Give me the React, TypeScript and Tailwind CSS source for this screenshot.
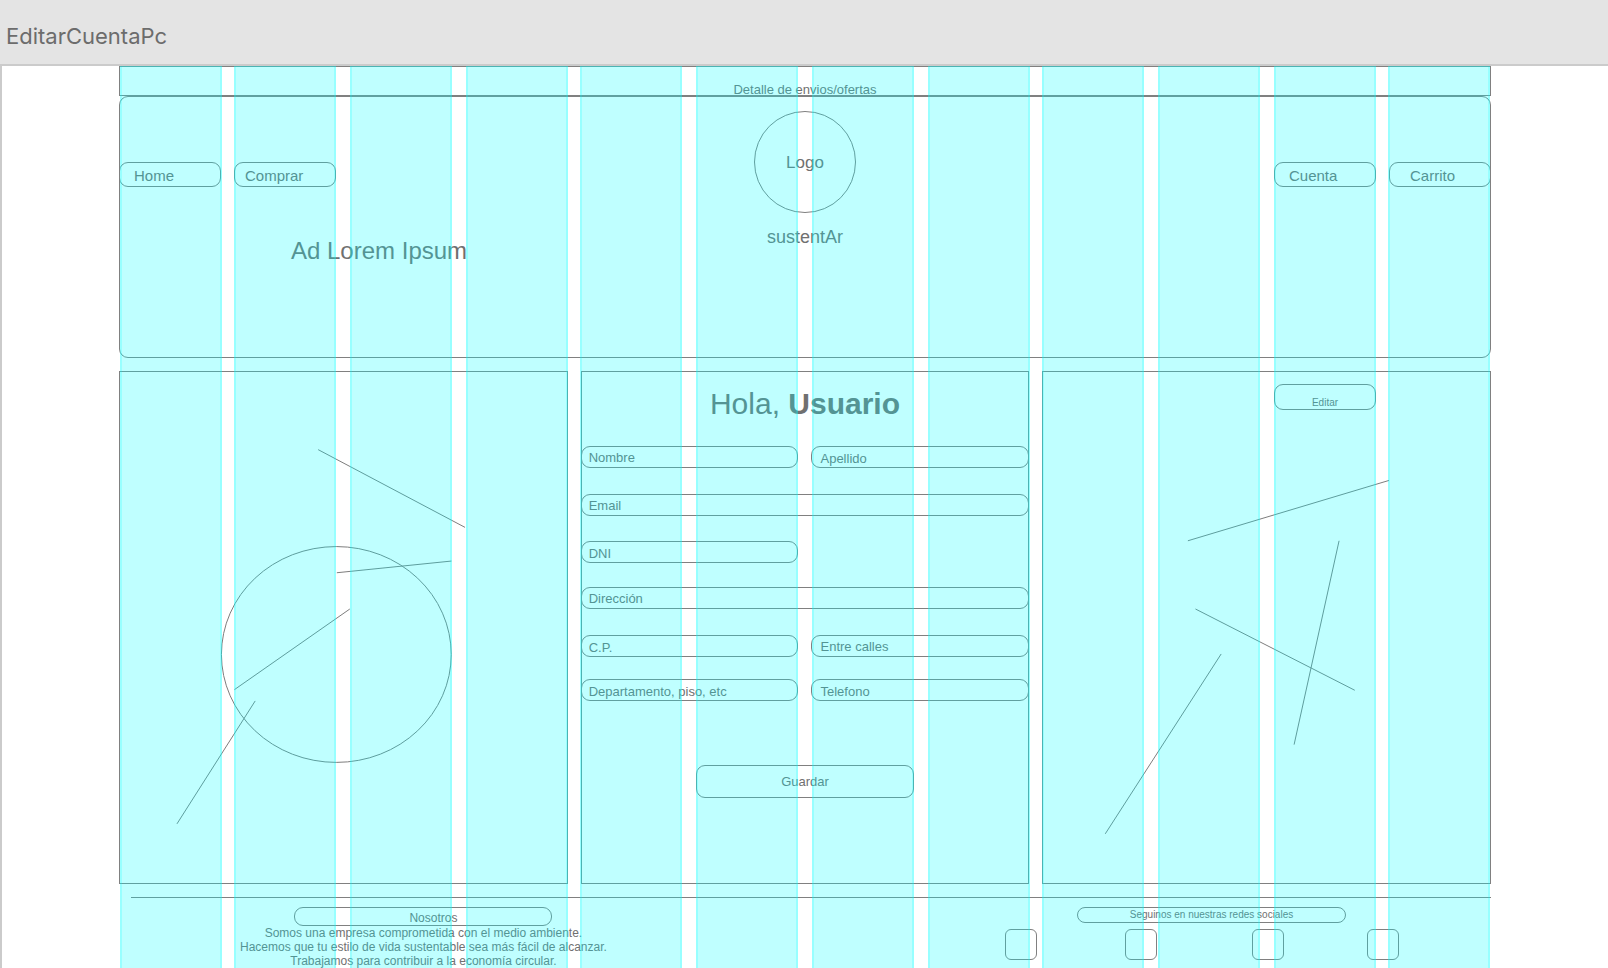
const guideColumns = Array.from({ length: 12 }, (_, i) => i);

const line = "border-[#808080]";
const pill = "border border-[#808080] rounded-[9px]";

type FieldProps = { id: string; label: string; wide?: boolean; alone?: boolean; right?: boolean; low?: boolean };

const fields: FieldProps[] = [
  { id: "nombre", label: "Nombre" },
  { id: "apellido", label: "Apellido", right: true, low: true },
  { id: "email", label: "Email", wide: true },
  { id: "dni", label: "DNI", alone: true, low: true },
  { id: "direccion", label: "Dirección", wide: true },
  { id: "cp", label: "C.P.", low: true },
  { id: "calles", label: "Entre calles", right: true },
  { id: "departamento", label: "Departamento, piso, etc", low: true },
  { id: "telefono", label: "Telefono", right: true, low: true },
];

function Field({ id, label, wide, alone, right, low }: FieldProps) {
  return (
    <div className={wide ? "col-span-2" : alone ? "col-start-1 col-end-2" : right ? "col-start-2" : "col-start-1"}>
      <input
        id={id}
        type="text"
        aria-label={label}
        placeholder={label}
        className={`${pill} block h-[22px] w-full bg-transparent pr-2 text-[13px] leading-4 text-[#707070] outline-none placeholder:text-[#707070] placeholder:opacity-100 ${right ? "pl-2" : "pl-[7px]"} ${low ? "pt-[3px]" : ""}`}
      />
    </div>
  );
}

function NavButton({ label, pad }: { label: string; pad: string }) {
  return (
    <a href="#" className={`${pill} flex h-[25px] w-[102px] items-center pt-[3px] text-[15px] leading-5 ${pad}`}>
      {label}
    </a>
  );
}

/* Twelve-column layout guide drawn over the artboard. */
function ColumnGuides() {
  return (
    <div
      aria-hidden="true"
      className="pointer-events-none absolute inset-y-0 right-[118px] left-[118px] grid grid-cols-[114fr_116fr_116fr_114fr_116fr_116fr_116fr_114fr_116fr_116fr_114fr_102fr]"
    >
      {guideColumns.map((c) => (
        <div key={c} className="w-[102px] border-x-2 border-t border-[#00ffff]/20 bg-[#00ffff]/25" />
      ))}
    </div>
  );
}

export default function App() {
  return (
    <div className="flex min-h-screen flex-col bg-[#e4e4e4] font-['Liberation_Sans',Arial,sans-serif] text-[#707070]">
      <div className="h-16 px-1.5 pt-5">
        <p className="font-['Inter',sans-serif] text-[22px] leading-8 text-[#6c6c6c]">EditarCuentaPc</p>
      </div>

      <main className="relative flex-1 border-t-2 border-l-2 border-[#cbcbcb] bg-white px-[117px]">
        <div className={`h-[30px] border ${line} pt-4 text-center text-[13px] leading-[14px]`}>
          Detalle de envios/ofertas
        </div>

        <header className={`${pill} h-[262px]`}>
          <div className="-mx-px grid grid-cols-3 gap-[13px]">
            <div className="pt-[65px]">
              <nav className="flex gap-[13px]">
                <NavButton label="Home" pad="pl-3.5" />
                <NavButton label="Comprar" pad="pl-2.5" />
              </nav>
              <p className="mt-12 pl-[172px] text-2xl leading-8 whitespace-nowrap">Ad Lorem Ipsum</p>
            </div>
            <div className="flex flex-col items-center pt-3.5">
              <div className={`flex size-[102px] items-center justify-center rounded-full border ${line} pt-0.5 text-[17px]`}>
                Logo
              </div>
              <p className="mt-2.5 text-lg leading-7">sustentAr</p>
            </div>
            <nav className="flex justify-end gap-[13px] pt-[65px]">
              <NavButton label="Cuenta" pad="pl-3.5" />
              <NavButton label="Carrito" pad="pl-5" />
            </nav>
          </div>
        </header>

        <div className="mt-[13px] grid grid-cols-3 gap-[13px]">
          <section className={`h-[513px] border ${line}`}>
            <svg viewBox="1 1 447 511" className="block h-full w-full" fill="none" stroke="#7c7c7c" strokeWidth="1">
              <ellipse cx="217.5" cy="283.5" rx="115" ry="108" />
              <path d="M199.3 78.5 346.3 156.3M218 201.7 332.7 190M115.5 318.7 231 238M136.3 330 58 453" />
            </svg>
          </section>

          <section className={`h-[513px] border ${line}`}>
            <h1 className="pt-3.5 text-center text-[30px] leading-9">
              Hola, <strong className="font-bold">Usuario</strong>
            </h1>
            <form className="-mx-px mt-6" onSubmit={(e) => e.preventDefault()}>
              <div className="grid grid-cols-2 grid-rows-[48px_47px_46px_48px_44px_22px] gap-x-[13px]">
                {fields.map((f) => (
                  <Field key={f.id} {...f} />
                ))}
              </div>
              <button type="submit" className={`${pill} mx-auto mt-16 block h-[33px] w-[218px] text-[13px]`}>
                Guardar
              </button>
            </form>
          </section>

          <section className={`relative h-[513px] border ${line}`}>
            <svg viewBox="1 1 447 511" className="block h-full w-full" fill="none" stroke="#7c7c7c" strokeWidth="1">
              <path d="M146 169.7 347.3 109.3M297.3 169.7 252.3 373.7M153.6 238 313 319.3M179.3 283 63.3 463" />
            </svg>
            <button
              type="button"
              className={`${pill} absolute top-3 right-[114px] h-[26px] w-[102px] pt-[11px] text-[10px] leading-[13px]`}
            >
              Editar
            </button>
          </section>
        </div>

        <footer className={`mt-[13px] ml-3 flex justify-between border-t ${line} pt-[9px]`}>
          <section className="pl-[109px] text-center text-xs leading-[14px]">
            <h2 className={`${pill} mx-auto h-[19px] w-[258px] pt-[3px] pl-5`}>Nosotros</h2>
            <p>Somos una empresa comprometida con el medio ambiente.</p>
            <p>Hacemos que tu estilo de vida sustentable sea más fácil de alcanzar.</p>
            <p>Trabajamos para contribuir a la economía circular.</p>
          </section>
          <section className="mr-[92px] w-[394px]">
            <h2 className={`${pill} ml-[72px] h-4 w-[269px] text-center text-[10px] leading-[14px]`}>
              Seguinos en nuestras redes sociales
            </h2>
            <div className="mt-1.5 grid grid-cols-[120fr_127fr_115fr_32fr]">
              {[1, 2, 3, 4].map((n) => (
                <a
                  key={n}
                  href="#"
                  aria-label={`Red social ${n}`}
                  className={`h-[31px] w-8 rounded-md border ${line}`}
                />
              ))}
            </div>
          </section>
        </footer>

        <ColumnGuides />
      </main>
    </div>
  );
}
